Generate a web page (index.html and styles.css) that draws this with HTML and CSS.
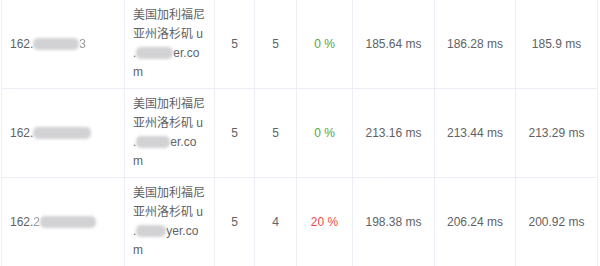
FILE: index.html
```html
<!DOCTYPE html>
<html lang="zh-CN">
<head>
<meta charset="utf-8">
<link rel="stylesheet" href="styles.css">
</head>
<body>
<table class="grid">
  <colgroup>
    <col class="c-ip"><col class="c-loc"><col class="c-n"><col class="c-n2"><col class="c-loss"><col class="c-ms"><col class="c-ms2"><col class="c-ms">
  </colgroup>
  <tbody>
    <tr>
      <td class="left">162.<span class="blur b1"></span><span class="ghost">3</span></td>
      <td class="left loc">美国加利福尼亚州洛杉矶 u.<span class="blur b-loc1"></span>er.com</td>
      <td>5</td>
      <td>5</td>
      <td class="ok">0 %</td>
      <td>185.64 ms</td>
      <td>186.28 ms</td>
      <td>185.9 ms</td>
    </tr>
    <tr>
      <td class="left">162.<span class="blur b2"></span></td>
      <td class="left loc">美国加利福尼亚州洛杉矶 u.<span class="blur b-loc2"></span>er.com</td>
      <td>5</td>
      <td>5</td>
      <td class="ok">0 %</td>
      <td>213.16 ms</td>
      <td>213.44 ms</td>
      <td>213.29 ms</td>
    </tr>
    <tr>
      <td class="left">162.<span class="ghost">2</span><span class="blur b3"></span></td>
      <td class="left loc">美国加利福尼亚州洛杉矶 u.<span class="blur b-loc3"></span>yer.com</td>
      <td>5</td>
      <td>4</td>
      <td class="bad">20 %</td>
      <td>198.38 ms</td>
      <td>206.24 ms</td>
      <td>200.92 ms</td>
    </tr>
  </tbody>
</table>
</body>
</html>
```

FILE: styles.css
```css
html, body {
  margin: 0;
  padding: 0;
  background: #ffffff;
}

body {
  font-family: "Liberation Sans", Arial, "Noto Sans CJK SC", sans-serif;
  font-size: 12px;
  color: #606266;
}

.grid {
  margin-left: 1px;
  border-left: 1px solid #ebeef5;
  border-collapse: separate;
  border-spacing: 0;
  table-layout: fixed;
  width: 596px;
}

.c-ip { width: 123px; }
.c-loc { width: 90px; }
.c-n { width: 40px; }
.c-n2 { width: 42px; }
.c-loss { width: 56px; }
.c-ms { width: 82px; }
.c-ms2 { width: 81px; }

.grid td {
  border-right: 1px solid #ebeef5;
  border-bottom: 1px solid #ebeef5;
  padding: 6px 8px;
  height: 76px;
  line-height: 19px;
  text-align: center;
  vertical-align: middle;
  white-space: nowrap;
}

.grid td.left {
  text-align: left;
}

.grid td.loc {
  white-space: normal;
  word-break: break-all;
  line-break: anywhere;
  padding-left: 8px;
  padding-right: 9px;
}

.ok { color: #5aa336; }
.bad { color: #f5484b; }

.blur {
  display: inline-block;
  height: 12px;
  vertical-align: -2px;
  background: #d2d2d5;
  border-radius: 5px;
  filter: blur(1.8px);
}

.b1 { width: 46px; }
.b2 { width: 58px; }
.b3 { width: 56px; }
.b-loc1 { width: 37px; }
.b-loc2 { width: 34px; }
.b-loc3 { width: 30px; }

.ghost {
  color: #9a9ca0;
  filter: blur(0.6px);
}
```
